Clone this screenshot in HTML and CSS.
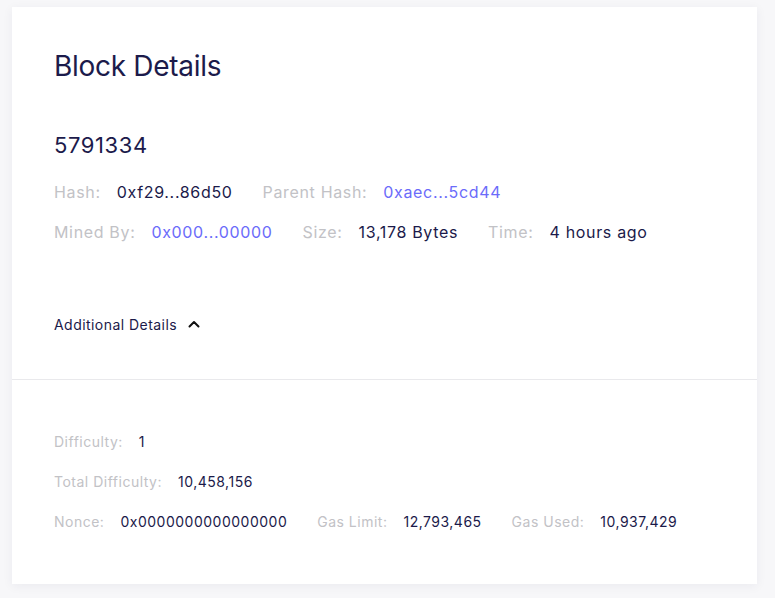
FILE: index.html
```html
<!DOCTYPE html>
<html>
<head>
<meta charset="utf-8">
<link rel="stylesheet" href="styles.css">
</head>
<body>
<div class="card">
  <div class="top">
    <h1 class="title">Block Details</h1>
    <div class="number">5791334</div>
    <div class="row big">
      <span class="item"><span class="label">Hash:</span><span class="value">0xf29...86d50</span></span>
      <span class="item"><span class="label">Parent Hash:</span><span class="value link">0xaec...5cd44</span></span>
    </div>
    <div class="row big">
      <span class="item"><span class="label">Mined By:</span><span class="value link">0x000...00000</span></span>
      <span class="item"><span class="label">Size:</span><span class="value">13,178 Bytes</span></span>
      <span class="item"><span class="label">Time:</span><span class="value">4 hours ago</span></span>
    </div>
    <div class="toggle">
      <span>Additional Details</span>
      <svg class="chev" width="12" height="8" viewBox="0 0 12 8"><path d="M1.5 6.5 L6 2 L10.5 6.5" fill="none" stroke="#111" stroke-width="2" stroke-linecap="round" stroke-linejoin="round"/></svg>
    </div>
  </div>
  <div class="bottom">
    <div class="row small">
      <span class="item"><span class="label">Difficulty:</span><span class="value">1</span></span>
    </div>
    <div class="row small">
      <span class="item"><span class="label">Total Difficulty:</span><span class="value">10,458,156</span></span>
    </div>
    <div class="row small">
      <span class="item"><span class="label">Nonce:</span><span class="value">0x0000000000000000</span></span>
      <span class="item"><span class="label">Gas Limit:</span><span class="value">12,793,465</span></span>
      <span class="item"><span class="label">Gas Used:</span><span class="value">10,937,429</span></span>
    </div>
  </div>
</div>
</body>
</html>
```

FILE: styles.css
```css
html, body {
  margin: 0;
  padding: 0;
  background: #f7f7f9;
  font-family: Inter, "Noto Sans", sans-serif;
  color: #1c1b4b;
}
body {
  padding: 7px 18px 14px 12px;
}
.card {
  background: #ffffff;
  width: 745px;
  height: 577px;
  box-shadow: 0 2px 10px rgba(30, 30, 80, 0.06);
  display: flex;
  flex-direction: column;
}
.top {
  padding: 0 42px;
  border-bottom: 1px solid #e9e9ec;
  height: 373px;
  box-sizing: border-box;
}
.title {
  margin: 0;
  padding-top: 42px;
  font-size: 28px;
  font-weight: 400;
  line-height: 34px;
  letter-spacing: -0.3px;
  color: #1c1b4b;
}
.number {
  margin-top: 48px;
  font-size: 22px;
  line-height: 28px;
  letter-spacing: 0.6px;
  color: #1c1b4b;
}
.row {
  display: flex;
  gap: 30px;
  align-items: center;
}
.row.big {
  font-size: 16px;
  height: 40px;
  letter-spacing: 0.66px;
}
.number + .row {
  margin-top: 13px;
}
.label {
  color: #c2c2c6;
  margin-right: 16px;
}
.value {
  color: #1b1a4a;
}
.link {
  color: #6b6bfa;
}
.toggle {
  margin-top: 64px;
  font-size: 14px;
  letter-spacing: 0.45px;
  display: flex;
  align-items: center;
  gap: 11px;
  color: #1b1a4a;
}
.chev {
  margin-top: -1px;
}
.bottom {
  padding: 41px 42px 0;
}
.row.small {
  font-size: 14px;
  height: 40px;
  letter-spacing: 0.5px;
}
```
